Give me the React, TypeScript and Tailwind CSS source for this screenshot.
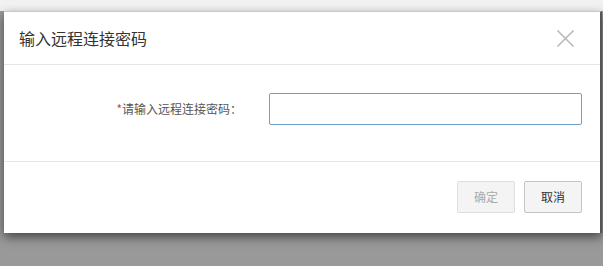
import React from "react";

export default function App() {
  return (
    <div
      className="w-[603px] h-[266px] flex flex-col bg-[#999999] overflow-hidden"
      style={{ fontFamily: '"Microsoft YaHei", "Noto Sans CJK SC", "Noto Sans", sans-serif' }}
    >
      <div className="h-[11px] shrink-0 bg-[#f2f2f2]" />
      <div className="flex pl-[4px]">
        <div className="w-[598px] h-[222px] bg-white flex flex-col border-t border-[#c8c8c8] border-r-2 border-r-[#555] shadow-[0_4px_10px_rgba(0,0,0,0.55)]">
          <div className="h-[53px] flex items-center justify-between pl-[15px] pr-[25px] border-b border-[#e5e5e5]">
            <span className="text-[16px] text-[#333] leading-none">输入远程连接密码</span>
            <svg width="19" height="19" viewBox="0 0 19 19" className="mt-[1px]">
              <path d="M1.5 1.5 L17.5 17.5 M17.5 1.5 L1.5 17.5" stroke="#b8b8b8" strokeWidth="1.6" fill="none" />
            </svg>
          </div>
          <div className="h-[97px] flex items-center border-b border-[#e8e8e8] pr-[18px] pb-[8px]">
            <div className="w-[238px] flex justify-end text-[12px] text-[#555] leading-none">
              <span className="text-[#e4393c]">*</span>
              <span>请输入远程连接密码：</span>
            </div>
            <input
              type="text"
              className="ml-[27px] w-[313px] h-[32px] border border-[#6fa0c8] rounded-[2px] outline-none px-2 text-[12px]"
            />
          </div>
          <div className="flex-1 flex justify-end items-start pt-[19px] pr-[18px] gap-[9px]">
            <button className="w-[58px] h-[32px] bg-[#f4f4f4] border border-[#dedede] rounded-[2px] text-[12px] text-[#aaa]">
              确定
            </button>
            <button className="w-[58px] h-[32px] bg-[#f4f4f4] border border-[#c4c4c4] rounded-[2px] text-[12px] text-[#333]">
              取消
            </button>
          </div>
        </div>
      </div>
    </div>
  );
}
